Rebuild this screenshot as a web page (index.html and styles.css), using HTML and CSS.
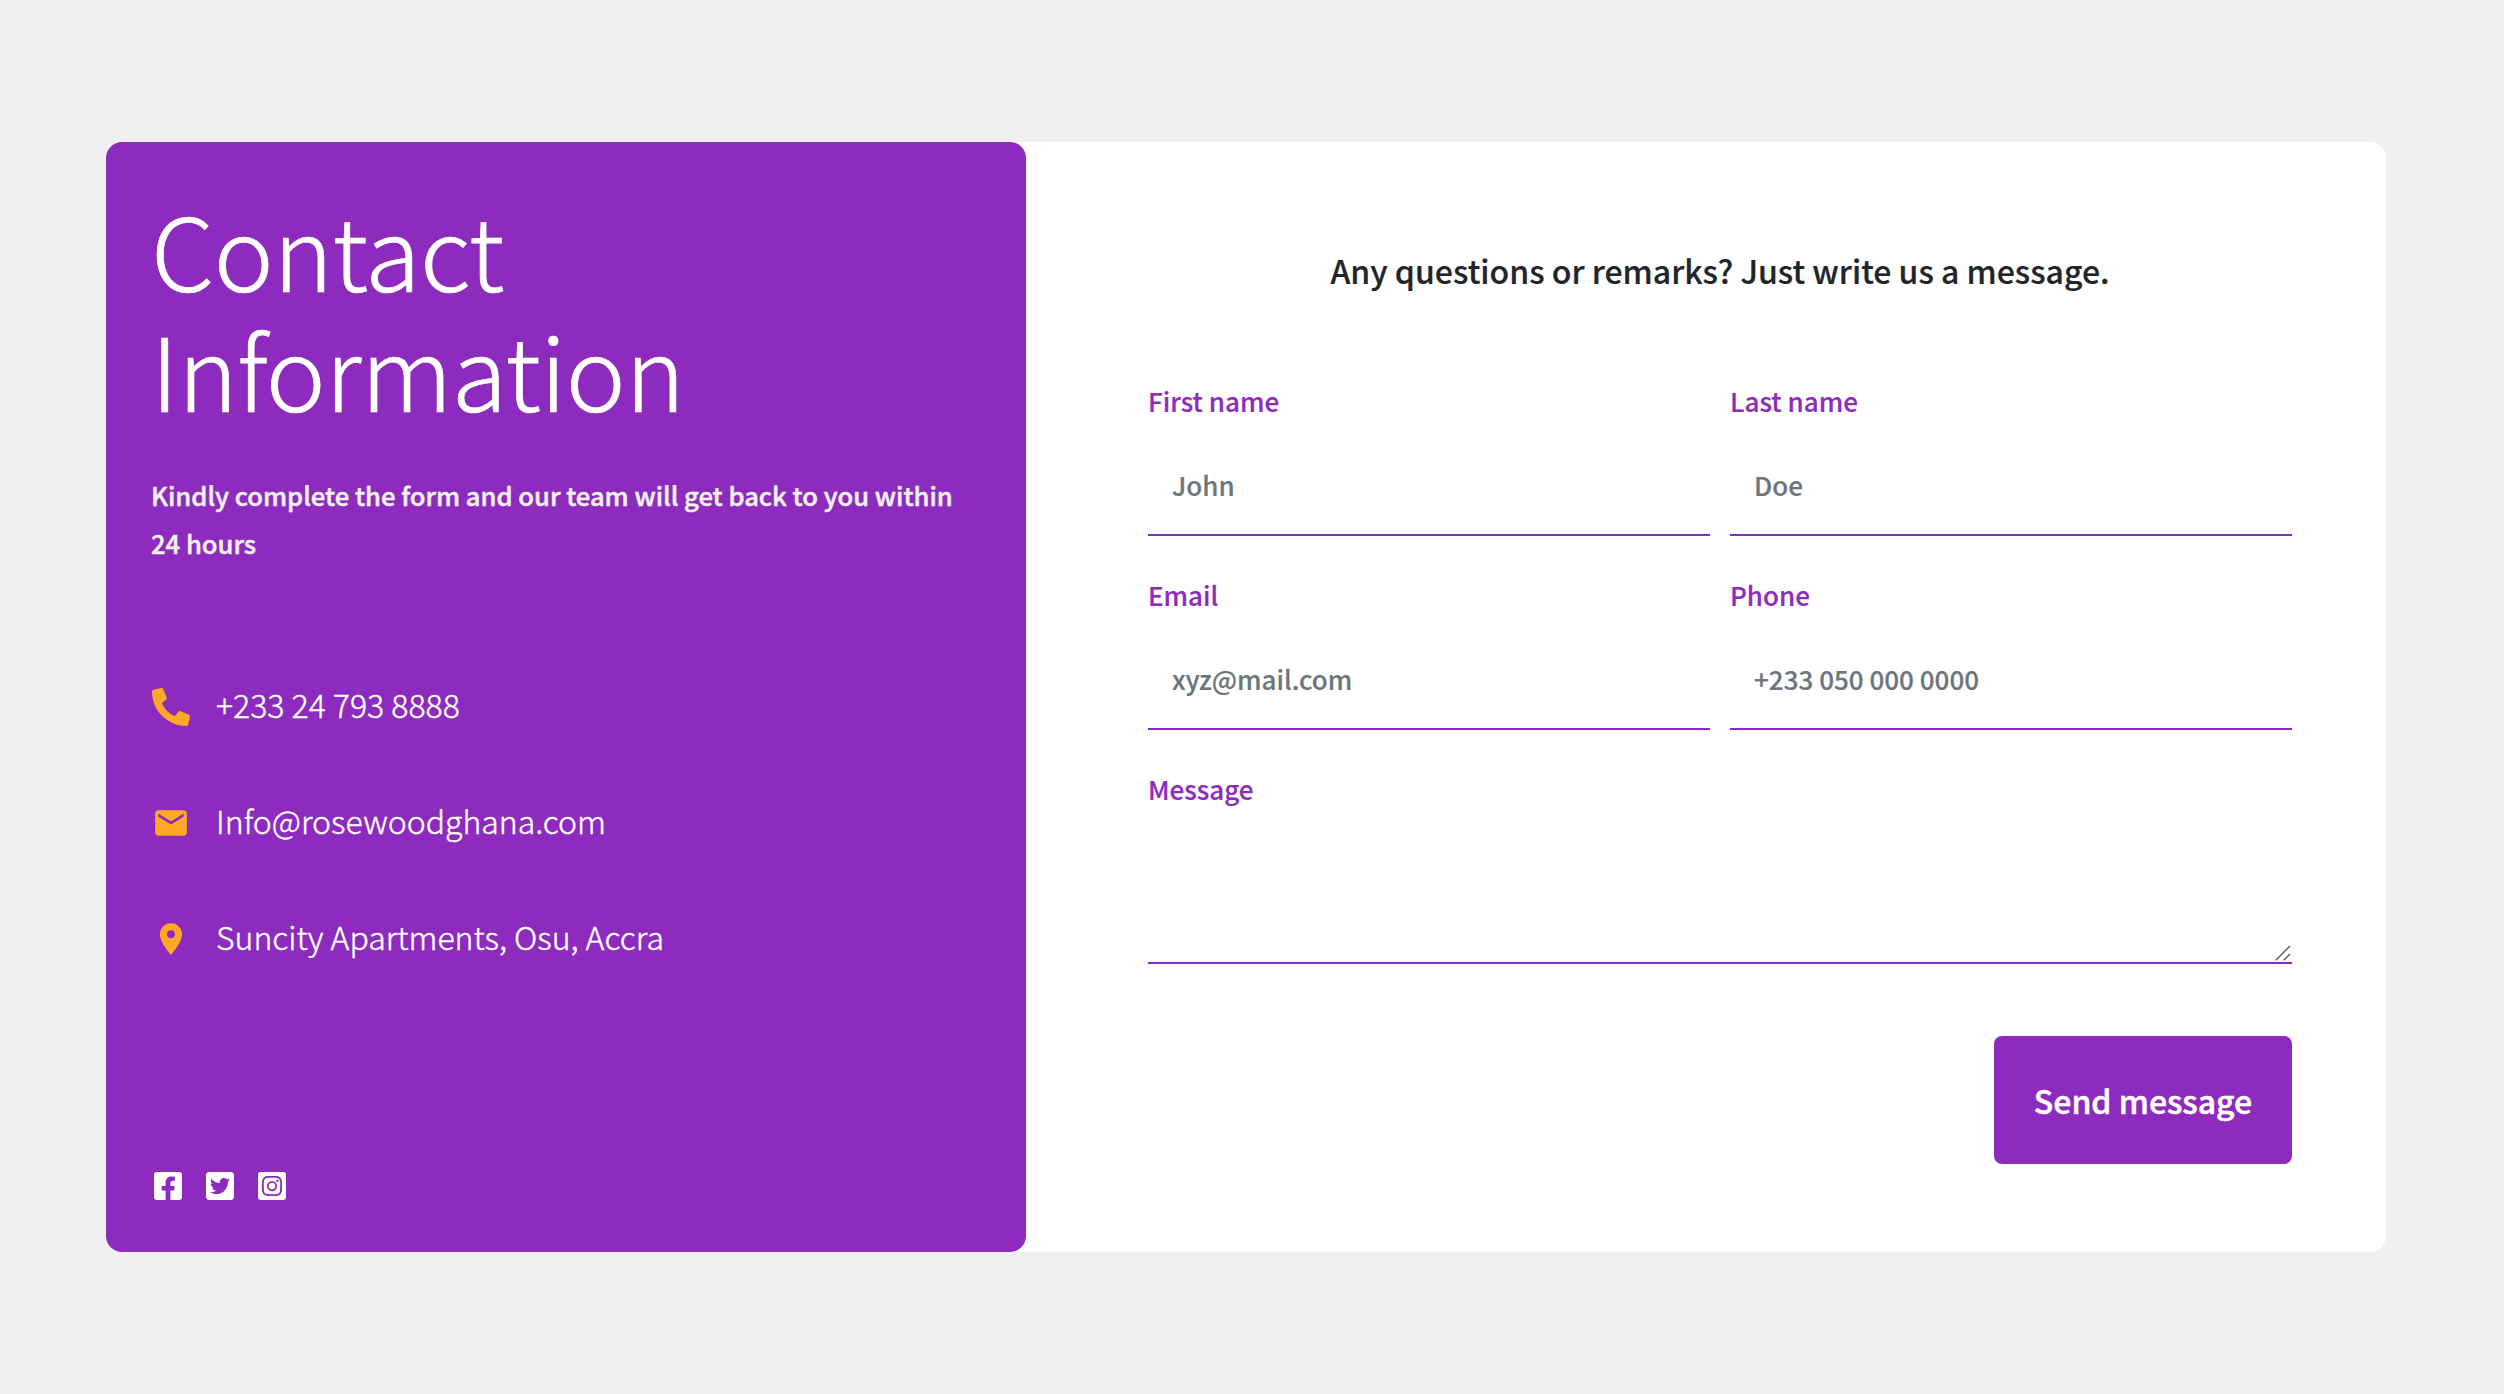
FILE: index.html
```html
<!DOCTYPE html>
<html lang="en">
<head>
<meta charset="utf-8">
<title>Contact Information</title>
<link rel="stylesheet" href="styles.css">
</head>
<body>
<main class="card">
  <section class="info">
    <h1 class="title">Contact Information</h1>
    <p class="lead">Kindly complete the form and our team will get back to you within 24 hours</p>
    <ul class="contacts">
      <li class="contact">
        <svg class="icon" viewBox="0 0 512 512"><path d="M497.390 361.800l-112-48a24 24 0 0 0-28 6.900l-49.600 60.600A370.660 370.660 0 0 1 130.600 204.110l60.600-49.600a23.940 23.940 0 0 0 6.900-28l-48-112A24.160 24.160 0 0 0 122.600.610l-104 24A24 24 0 0 0 0 48c0 256.500 207.900 464 464 464a24 24 0 0 0 23.400-18.600l24-104a24.290 24.290 0 0 0-14.010-27.600z"/></svg>
        <span class="contact-text">+233 24 793 8888</span>
      </li>
      <li class="contact">
        <svg class="icon" viewBox="0 0 24 24"><path d="M20 4H4c-1.100 0-2 .9-2 2v12c0 1.100.9 2 2 2h16c1.100 0 2-.9 2-2V6c0-1.100-.9-2-2-2zm0 4l-8 5-8-5V6l8 5 8-5z"/></svg>
        <span class="contact-text">Info@rosewoodghana.com</span>
      </li>
      <li class="contact">
        <svg class="icon" viewBox="0 0 24 24"><path d="M12 2C8.130 2 5 5.130 5 9c0 5.250 7 13 7 13s7-7.750 7-13c0-3.870-3.130-7-7-7zm0 9.500a2.500 2.500 0 0 1 0-5 2.500 2.500 0 0 1 0 5z"/></svg>
        <span class="contact-text">Suncity Apartments, Osu, Accra</span>
      </li>
    </ul>
    <div class="social">
      <svg class="social-icon" viewBox="0 0 448 512"><path d="M400 32H48A48 48 0 0 0 0 80v352a48 48 0 0 0 48 48h137.250V327.690h-63V256h63v-54.640c0-62.150 37-96.480 93.670-96.480 27.140 0 55.520 4.840 55.520 4.840v61h-31.270c-30.810 0-40.420 19.120-40.420 38.730V256h68.780l-11 71.690h-57.780V480H400a48 48 0 0 0 48-48V80a48 48 0 0 0-48-48z"/></svg>
      <svg class="social-icon" viewBox="0 0 448 512"><path d="M400 32H48C21.500 32 0 53.500 0 80v352c0 26.500 21.500 48 48 48h352c26.500 0 48-21.500 48-48V80c0-26.500-21.500-48-48-48zm-48.900 158.800c.2 2.800.2 5.700.2 8.500 0 86.700-66 186.600-186.600 186.600-37.200 0-71.700-10.800-100.700-29.400 5.300.6 10.400.8 15.800.8 30.700 0 58.900-10.400 81.400-28-28.800-.6-53-19.500-61.300-45.500 10.100 1.500 19.200 1.500 29.600-1.200-30-6.100-52.500-32.500-52.500-64.400v-.8c8.700 4.900 18.900 7.900 29.600 8.300a65.447 65.447 0 0 1-29.200-54.600c0-12.200 3.200-23.400 8.900-33.100 32.300 39.800 80.800 65.800 135.200 68.600-9.300-44.500 24-80.600 64-80.600 18.900 0 35.900 7.900 47.900 20.700 14.800-2.800 29-8.300 41.600-15.800-4.900 15.200-15.200 28-28.800 36.100 13.200-1.400 26-5.100 37.800-10.200-8.900 13.100-20.100 24.700-32.900 34z"/></svg>
      <svg class="social-icon" viewBox="0 0 448 512"><path d="M224 202.660A53.340 53.340 0 1 0 277.360 256 53.380 53.380 0 0 0 224 202.660zm124.710-41a54 54 0 0 0-30.410-30.410c-21-8.290-71-6.430-94.300-6.430s-73.250-1.930-94.310 6.430a54 54 0 0 0-30.410 30.410c-8.280 21-6.430 71.050-6.430 94.330s-1.850 73.270 6.470 94.340a54 54 0 0 0 30.410 30.410c21 8.290 71 6.430 94.310 6.430s73.240 1.930 94.300-6.430a54 54 0 0 0 30.410-30.410c8.350-21 6.430-71.050 6.430-94.330s1.920-73.260-6.430-94.330zM224 338a82 82 0 1 1 82-82 81.900 81.900 0 0 1-82 82zm85.380-148.300a19.140 19.140 0 1 1 19.130-19.140 19.100 19.100 0 0 1-19.090 19.180zM400 32H48A48 48 0 0 0 0 80v352a48 48 0 0 0 48 48h352a48 48 0 0 0 48-48V80a48 48 0 0 0-48-48zm-17.120 290c-1.290 25.630-7.140 48.340-25.850 67s-41.400 24.630-67 25.850c-26.410 1.490-105.590 1.490-132 0-25.630-1.290-48.260-7.150-67-25.850s-24.630-41.420-25.850-67c-1.490-26.420-1.490-105.610 0-132 1.290-25.630 7.070-48.340 25.850-67s41.470-24.560 67-25.780c26.410-1.490 105.590-1.490 132 0 25.630 1.290 48.330 7.150 67 25.850s24.630 41.420 25.850 67.050c1.490 26.320 1.490 105.440 0 131.880z"/></svg>
    </div>
  </section>
  <section class="form-pane">
    <h2 class="heading">Any questions or remarks? Just write us a message.</h2>
    <form class="form">
      <label class="field"><span class="label">First name</span><input class="input" type="text" placeholder="John"></label>
      <label class="field"><span class="label">Last name</span><input class="input" type="text" placeholder="Doe"></label>
      <label class="field"><span class="label">Email</span><input class="input" type="email" placeholder="xyz@mail.com"></label>
      <label class="field"><span class="label">Phone</span><input class="input" type="tel" placeholder="+233 050 000 0000"></label>
      <label class="field wide"><span class="label">Message</span><textarea class="input area"></textarea>
        <svg class="grip" viewBox="0 0 16 16"><path d="M.8 15.200L15 1M8.800 15.200L15 9"/></svg>
      </label>
      <button class="send" type="button">Send message</button>
    </form>
  </section>
</main>
</body>
</html>
```
FILE: styles.css
```css
* { box-sizing: border-box; }
body {
  margin: 0;
  padding: 142px 118px 0 106px;
  background: #f0f0f0;
  font-family: "Noto Sans CJK SC", "Noto Sans", sans-serif;
  color: #212529;
}
.card {
  display: flex;
  height: 1110px;
  background: #fff;
  border-radius: 16px;
}
.info {
  display: flex;
  flex-direction: column;
  width: 920px;
  padding: 46px 45px 50px;
  background: #8d2bbe;
  color: #fff;
  border-radius: 16px;
}
.title {
  width: 600px;
  margin: 0;
  font-size: 101px;
  font-weight: 300;
  line-height: 120px;
  letter-spacing: -0.5px;
  -webkit-text-stroke: 0.7px;
}
.lead {
  margin: 43px 0 0;
  color: #f0f0f0;
  font-size: 25.600px;
  font-weight: 500;
  line-height: 48px;
  letter-spacing: -0.01px;
  -webkit-text-stroke: 0.5px;
}
.contacts {
  display: grid;
  gap: 56px;
  margin: 110px 0 0;
  padding: 0 0 0 1px;
  list-style: none;
}
.contact {
  display: flex;
  align-items: center;
  gap: 26px;
  height: 60px;
  font-size: 32px;
  font-weight: 300;
}
.contact-text { padding-bottom: 6px; -webkit-text-stroke: 0.4px; }
.icon { width: 38px; height: 38px; fill: #ffa726; }
.social { display: flex; gap: 24px; margin-top: auto; padding-left: 3px; }
.social-icon { width: 28px; height: 32px; fill: #fff; }
.form-pane { flex: 1; padding: 98px 94px 0 122px; }
.heading {
  margin: 0;
  text-align: center;
  font-size: 32px;
  font-weight: 500;
  line-height: 60px;
  -webkit-text-stroke: 0.2px;
}
.form {
  display: grid;
  grid-template-columns: 1fr 1fr;
  column-gap: 20px;
  row-gap: 35px;
  margin-top: 77px;
}
.field { position: relative; display: block; }
.wide { grid-column: 1 / -1; }
.label {
  display: block;
  color: #8d2bbe;
  font-size: 26px;
  font-weight: 500;
  line-height: 48px;
  -webkit-text-stroke: 0.2px;
}
.input {
  display: block;
  width: 100%;
  height: 94px;
  margin-top: 17px;
  padding: 0 24px 8px;
  border: 0;
  border-bottom: 2px solid #8d2bbe;
  background: #fff;
  font: 500 26px/48px "Noto Sans CJK SC", "Noto Sans", sans-serif;
}
.input::placeholder { color: #6c757d; opacity: 1; -webkit-text-stroke: 0.2px; }
.area { height: 134px; resize: none; }
.grip {
  position: absolute;
  right: 1px;
  bottom: 3px;
  width: 16px;
  height: 16px;
  fill: none;
  stroke: #5f5f5f;
  stroke-width: 1.500;
}
.send {
  grid-column: 2;
  justify-self: end;
  width: 298px;
  height: 128px;
  margin-top: 37px;
  padding: 0;
  border: 0;
  border-radius: 8px;
  background: #8d2bbe;
  color: #fff;
  font: 500 32px/60px "Noto Sans CJK SC", "Noto Sans", sans-serif;
  -webkit-text-stroke: 0.5px;
}
```
